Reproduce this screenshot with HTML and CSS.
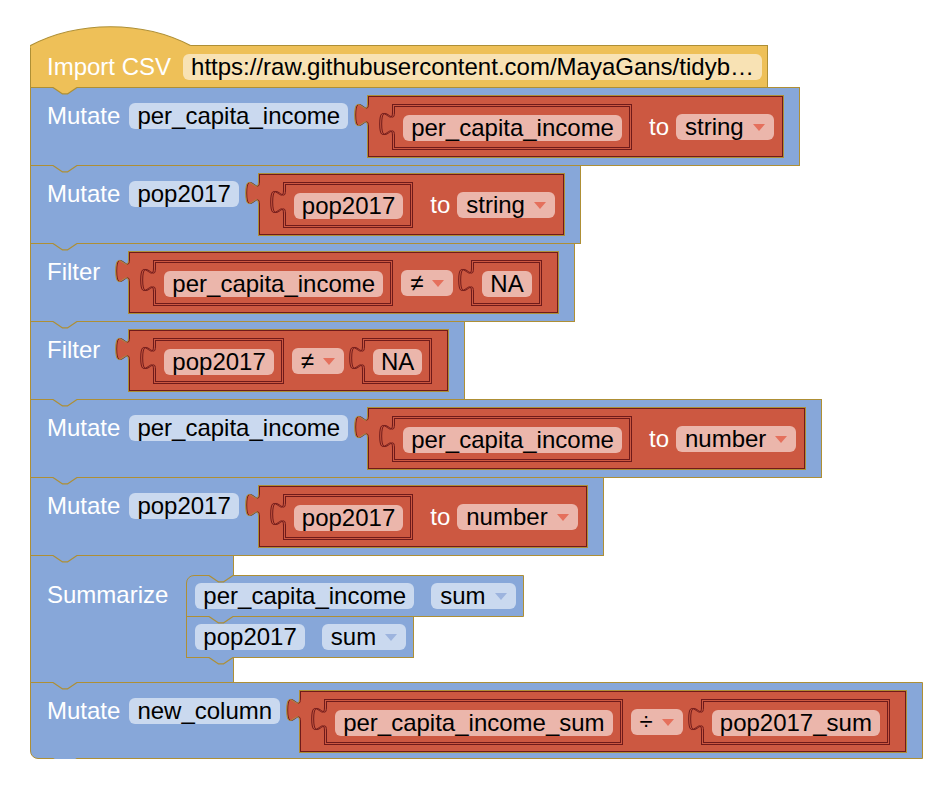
FILE: index.html
```html
<!doctype html>
<html lang="en">
  <head>
    <meta charset="utf-8" />
    <meta name="viewport" content="width=device-width, initial-scale=1" />
    <title>Blocks workspace</title>
    <link rel="stylesheet" href="styles.css">
  </head>
  <body>
    <div class="workspace">
      <div class="stack">

        <!-- Import -->
        <div class="block import">
          <svg class="hat" width="162" height="26" viewBox="0 0 162 26"><path class="hf" d="M0.5,26V23.5c48,-25 112,-25 160,0V26Z"/><path class="hs" d="M0.5,23.5c48,-25 112,-25 160,0"/></svg>
          <span class="lbl">Import CSV</span>
          <span class="field">https://raw.githubusercontent.com/MayaGans/tidyb…</span>
        </div>

        <!-- Mutate per_capita_income -> string -->
        <div class="block stmt">
          <svg class="notch from-yellow" width="26" height="9" viewBox="0 -1 26 9"><path class="nf" d="M0,-1V0.5L9.6,6.9H14.4L24,0.5V-1Z"/><path class="ns" d="M0,0.5L9.6,6.9H14.4L24,0.5"/></svg>
          <span class="lbl">Mutate</span>
          <span class="field">per_capita_income</span>
          <div class="val">
            <svg class="tab" width="18" height="34" viewBox="0 0 18 34"><path class="tf" d="M13.5,8c0,16 -12.8,-12.8 -12.8,12s12.8,-4 12.8,12H17V8Z"/><path class="t2" d="M14.5,8c0,16 -12.8,-12.8 -12.8,12s12.8,-4 12.8,12"/><path class="t1" d="M13.5,8c0,16 -12.8,-12.8 -12.8,12s12.8,-4 12.8,12"/></svg>
            <div class="frame">
              <svg class="tab" width="18" height="34" viewBox="0 0 18 34"><path class="tf" d="M13.5,8c0,16 -12.8,-12.8 -12.8,12s12.8,-4 12.8,12H17V8Z"/><path class="t2" d="M15.5,8c0,16 -12.8,-12.8 -12.8,12s12.8,-4 12.8,12"/><path class="t1" d="M13.5,8c0,16 -12.8,-12.8 -12.8,12s12.8,-4 12.8,12"/></svg>
              <span class="field">per_capita_income</span>
            </div>
            <span class="rtxt">to</span>
            <span class="dd">string<i class="arrow"></i></span>
          </div>
        </div>

        <!-- Mutate pop2017 -> string -->
        <div class="block stmt">
          <svg class="notch" width="26" height="9" viewBox="0 -1 26 9"><path class="nf" d="M0,-1V0.5L9.6,6.9H14.4L24,0.5V-1Z"/><path class="ns" d="M0,0.5L9.6,6.9H14.4L24,0.5"/></svg>
          <span class="lbl">Mutate</span>
          <span class="field">pop2017</span>
          <div class="val">
            <svg class="tab" width="18" height="34" viewBox="0 0 18 34"><path class="tf" d="M13.5,8c0,16 -12.8,-12.8 -12.8,12s12.8,-4 12.8,12H17V8Z"/><path class="t2" d="M14.5,8c0,16 -12.8,-12.8 -12.8,12s12.8,-4 12.8,12"/><path class="t1" d="M13.5,8c0,16 -12.8,-12.8 -12.8,12s12.8,-4 12.8,12"/></svg>
            <div class="frame">
              <svg class="tab" width="18" height="34" viewBox="0 0 18 34"><path class="tf" d="M13.5,8c0,16 -12.8,-12.8 -12.8,12s12.8,-4 12.8,12H17V8Z"/><path class="t2" d="M15.5,8c0,16 -12.8,-12.8 -12.8,12s12.8,-4 12.8,12"/><path class="t1" d="M13.5,8c0,16 -12.8,-12.8 -12.8,12s12.8,-4 12.8,12"/></svg>
              <span class="field">pop2017</span>
            </div>
            <span class="rtxt">to</span>
            <span class="dd">string<i class="arrow"></i></span>
          </div>
        </div>

        <!-- Filter per_capita_income != NA -->
        <div class="block stmt">
          <svg class="notch" width="26" height="9" viewBox="0 -1 26 9"><path class="nf" d="M0,-1V0.5L9.6,6.9H14.4L24,0.5V-1Z"/><path class="ns" d="M0,0.5L9.6,6.9H14.4L24,0.5"/></svg>
          <span class="lbl">Filter</span>
          <div class="val">
            <svg class="tab" width="18" height="34" viewBox="0 0 18 34"><path class="tf" d="M13.5,8c0,16 -12.8,-12.8 -12.8,12s12.8,-4 12.8,12H17V8Z"/><path class="t2" d="M14.5,8c0,16 -12.8,-12.8 -12.8,12s12.8,-4 12.8,12"/><path class="t1" d="M13.5,8c0,16 -12.8,-12.8 -12.8,12s12.8,-4 12.8,12"/></svg>
            <div class="frame">
              <svg class="tab" width="18" height="34" viewBox="0 0 18 34"><path class="tf" d="M13.5,8c0,16 -12.8,-12.8 -12.8,12s12.8,-4 12.8,12H17V8Z"/><path class="t2" d="M15.5,8c0,16 -12.8,-12.8 -12.8,12s12.8,-4 12.8,12"/><path class="t1" d="M13.5,8c0,16 -12.8,-12.8 -12.8,12s12.8,-4 12.8,12"/></svg>
              <span class="field">per_capita_income</span>
            </div>
            <span class="dd">≠<i class="arrow"></i></span>
            <div class="frame">
              <svg class="tab" width="18" height="34" viewBox="0 0 18 34"><path class="tf" d="M13.5,8c0,16 -12.8,-12.8 -12.8,12s12.8,-4 12.8,12H17V8Z"/><path class="t2" d="M15.5,8c0,16 -12.8,-12.8 -12.8,12s12.8,-4 12.8,12"/><path class="t1" d="M13.5,8c0,16 -12.8,-12.8 -12.8,12s12.8,-4 12.8,12"/></svg>
              <span class="field">NA</span>
            </div>
          </div>
        </div>

        <!-- Filter pop2017 != NA -->
        <div class="block stmt">
          <svg class="notch" width="26" height="9" viewBox="0 -1 26 9"><path class="nf" d="M0,-1V0.5L9.6,6.9H14.4L24,0.5V-1Z"/><path class="ns" d="M0,0.5L9.6,6.9H14.4L24,0.5"/></svg>
          <span class="lbl">Filter</span>
          <div class="val">
            <svg class="tab" width="18" height="34" viewBox="0 0 18 34"><path class="tf" d="M13.5,8c0,16 -12.8,-12.8 -12.8,12s12.8,-4 12.8,12H17V8Z"/><path class="t2" d="M14.5,8c0,16 -12.8,-12.8 -12.8,12s12.8,-4 12.8,12"/><path class="t1" d="M13.5,8c0,16 -12.8,-12.8 -12.8,12s12.8,-4 12.8,12"/></svg>
            <div class="frame">
              <svg class="tab" width="18" height="34" viewBox="0 0 18 34"><path class="tf" d="M13.5,8c0,16 -12.8,-12.8 -12.8,12s12.8,-4 12.8,12H17V8Z"/><path class="t2" d="M15.5,8c0,16 -12.8,-12.8 -12.8,12s12.8,-4 12.8,12"/><path class="t1" d="M13.5,8c0,16 -12.8,-12.8 -12.8,12s12.8,-4 12.8,12"/></svg>
              <span class="field">pop2017</span>
            </div>
            <span class="dd">≠<i class="arrow"></i></span>
            <div class="frame">
              <svg class="tab" width="18" height="34" viewBox="0 0 18 34"><path class="tf" d="M13.5,8c0,16 -12.8,-12.8 -12.8,12s12.8,-4 12.8,12H17V8Z"/><path class="t2" d="M15.5,8c0,16 -12.8,-12.8 -12.8,12s12.8,-4 12.8,12"/><path class="t1" d="M13.5,8c0,16 -12.8,-12.8 -12.8,12s12.8,-4 12.8,12"/></svg>
              <span class="field">NA</span>
            </div>
          </div>
        </div>

        <!-- Mutate per_capita_income -> number -->
        <div class="block stmt">
          <svg class="notch" width="26" height="9" viewBox="0 -1 26 9"><path class="nf" d="M0,-1V0.5L9.6,6.9H14.4L24,0.5V-1Z"/><path class="ns" d="M0,0.5L9.6,6.9H14.4L24,0.5"/></svg>
          <span class="lbl">Mutate</span>
          <span class="field">per_capita_income</span>
          <div class="val">
            <svg class="tab" width="18" height="34" viewBox="0 0 18 34"><path class="tf" d="M13.5,8c0,16 -12.8,-12.8 -12.8,12s12.8,-4 12.8,12H17V8Z"/><path class="t2" d="M14.5,8c0,16 -12.8,-12.8 -12.8,12s12.8,-4 12.8,12"/><path class="t1" d="M13.5,8c0,16 -12.8,-12.8 -12.8,12s12.8,-4 12.8,12"/></svg>
            <div class="frame">
              <svg class="tab" width="18" height="34" viewBox="0 0 18 34"><path class="tf" d="M13.5,8c0,16 -12.8,-12.8 -12.8,12s12.8,-4 12.8,12H17V8Z"/><path class="t2" d="M15.5,8c0,16 -12.8,-12.8 -12.8,12s12.8,-4 12.8,12"/><path class="t1" d="M13.5,8c0,16 -12.8,-12.8 -12.8,12s12.8,-4 12.8,12"/></svg>
              <span class="field">per_capita_income</span>
            </div>
            <span class="rtxt">to</span>
            <span class="dd">number<i class="arrow"></i></span>
          </div>
        </div>

        <!-- Mutate pop2017 -> number -->
        <div class="block stmt">
          <svg class="notch" width="26" height="9" viewBox="0 -1 26 9"><path class="nf" d="M0,-1V0.5L9.6,6.9H14.4L24,0.5V-1Z"/><path class="ns" d="M0,0.5L9.6,6.9H14.4L24,0.5"/></svg>
          <span class="lbl">Mutate</span>
          <span class="field">pop2017</span>
          <div class="val">
            <svg class="tab" width="18" height="34" viewBox="0 0 18 34"><path class="tf" d="M13.5,8c0,16 -12.8,-12.8 -12.8,12s12.8,-4 12.8,12H17V8Z"/><path class="t2" d="M14.5,8c0,16 -12.8,-12.8 -12.8,12s12.8,-4 12.8,12"/><path class="t1" d="M13.5,8c0,16 -12.8,-12.8 -12.8,12s12.8,-4 12.8,12"/></svg>
            <div class="frame">
              <svg class="tab" width="18" height="34" viewBox="0 0 18 34"><path class="tf" d="M13.5,8c0,16 -12.8,-12.8 -12.8,12s12.8,-4 12.8,12H17V8Z"/><path class="t2" d="M15.5,8c0,16 -12.8,-12.8 -12.8,12s12.8,-4 12.8,12"/><path class="t1" d="M13.5,8c0,16 -12.8,-12.8 -12.8,12s12.8,-4 12.8,12"/></svg>
              <span class="field">pop2017</span>
            </div>
            <span class="rtxt">to</span>
            <span class="dd">number<i class="arrow"></i></span>
          </div>
        </div>

        <!-- Summarize -->
        <div class="block summ">
          <svg class="notch" width="26" height="9" viewBox="0 -1 26 9"><path class="nf" d="M0,-1V0.5L9.6,6.9H14.4L24,0.5V-1Z"/><path class="ns" d="M0,0.5L9.6,6.9H14.4L24,0.5"/></svg>
          <span class="lbl">Summarize</span>
          <div class="inner">
            <div class="nested first">
              <svg class="notch" width="26" height="9" viewBox="0 -1 26 9"><path class="nf" d="M0,-1V0.5L9.6,6.9H14.4L24,0.5V-1Z"/><path class="ns" d="M0,0.5L9.6,6.9H14.4L24,0.5"/></svg>
              <span class="field">per_capita_income</span>
              <span class="dd">sum<i class="arrow"></i></span>
            </div>
            <div class="nested">
              <svg class="notch" width="26" height="9" viewBox="0 -1 26 9"><path class="nf" d="M0,-1V0.5L9.6,6.9H14.4L24,0.5V-1Z"/><path class="ns" d="M0,0.5L9.6,6.9H14.4L24,0.5"/></svg>
              <span class="field">pop2017</span>
              <span class="dd">sum<i class="arrow"></i></span>
              <svg class="next" width="26" height="9" viewBox="0 -1 26 9"><path class="nf" d="M0,-1V0.5L9.6,6.9H14.4L24,0.5V-1Z"/><path class="ns" d="M0,0.5L9.6,6.9H14.4L24,0.5"/></svg>
            </div>
          </div>
        </div>

        <!-- Mutate new_column = a / b -->
        <div class="block stmt last">
          <svg class="notch" width="26" height="9" viewBox="0 -1 26 9"><path class="nf" d="M0,-1V0.5L9.6,6.9H14.4L24,0.5V-1Z"/><path class="ns" d="M0,0.5L9.6,6.9H14.4L24,0.5"/></svg>
          <span class="lbl">Mutate</span>
          <span class="field">new_column</span>
          <div class="val">
            <svg class="tab" width="18" height="34" viewBox="0 0 18 34"><path class="tf" d="M13.5,8c0,16 -12.8,-12.8 -12.8,12s12.8,-4 12.8,12H17V8Z"/><path class="t2" d="M14.5,8c0,16 -12.8,-12.8 -12.8,12s12.8,-4 12.8,12"/><path class="t1" d="M13.5,8c0,16 -12.8,-12.8 -12.8,12s12.8,-4 12.8,12"/></svg>
            <div class="frame">
              <svg class="tab" width="18" height="34" viewBox="0 0 18 34"><path class="tf" d="M13.5,8c0,16 -12.8,-12.8 -12.8,12s12.8,-4 12.8,12H17V8Z"/><path class="t2" d="M15.5,8c0,16 -12.8,-12.8 -12.8,12s12.8,-4 12.8,12"/><path class="t1" d="M13.5,8c0,16 -12.8,-12.8 -12.8,12s12.8,-4 12.8,12"/></svg>
              <span class="field">per_capita_income_sum</span>
            </div>
            <span class="dd">÷<i class="arrow"></i></span>
            <div class="frame">
              <svg class="tab" width="18" height="34" viewBox="0 0 18 34"><path class="tf" d="M13.5,8c0,16 -12.8,-12.8 -12.8,12s12.8,-4 12.8,12H17V8Z"/><path class="t2" d="M15.5,8c0,16 -12.8,-12.8 -12.8,12s12.8,-4 12.8,12"/><path class="t1" d="M13.5,8c0,16 -12.8,-12.8 -12.8,12s12.8,-4 12.8,12"/></svg>
              <span class="field">pop2017_sum</span>
            </div>
          </div>
          <svg class="next" width="26" height="9" viewBox="0 -1 26 9"><path class="nf" d="M0,-1V0.5L9.6,6.9H14.4L24,0.5V-1Z"/><path class="ns" d="M0,0.5L9.6,6.9H14.4L24,0.5"/></svg>
        </div>

      </div>
    </div>
  </body>
</html>
```

FILE: styles.css
```css
* {
  box-sizing: border-box;
}

body {
  margin: 0;
  background: #fff;
  font-family: "Liberation Sans", Arial, sans-serif;
  font-size: 24px;
}

.workspace {
  padding: 45px 0 0 30px;
}

.stack {
  display: flex;
  flex-direction: column;
  align-items: flex-start;
}

/* blocks */
.block {
  position: relative;
  border: 1px solid #ae8f35;
  flex-shrink: 0;
}

.block + .block {
  margin-top: -1px;
}

.import {
  display: flex;
  align-items: center;
  background: #eec058;
  padding: 8px 5px 7px 16px;
}

.import .lbl {
  margin-right: 12px;
}

.import .field {
  background: #f8e2b4;
}

.stmt {
  display: flex;
  align-items: flex-start;
  background: #87a7d9;
  padding: 7px 15px 7px 16px;
}

.stmt.last {
  padding-bottom: 5px;
  border-bottom-left-radius: 8px;
}

.stmt > .lbl,
.stmt > .field {
  margin-top: 8px;
}

.lbl {
  color: #fff;
  line-height: 26px;
  white-space: nowrap;
  margin-right: 9px;
  flex-shrink: 0;
}

.field {
  display: inline-block;
  flex-shrink: 0;
  height: 26px;
  line-height: 26px;
  padding: 0 8px;
  border-radius: 6px;
  background: #cad9ef;
  color: #000;
  white-space: nowrap;
}

/* red value blocks */
.val {
  position: relative;
  display: flex;
  align-items: center;
  flex-shrink: 0;
  margin-left: 19px;
  padding: 8px 9px 7px 24px;
  background: #cc5841;
  border: 1px solid #ae8f35;
  box-shadow: inset 0 0 0 1px #6f1a1a;
}

.frame {
  position: relative;
  display: flex;
  flex-shrink: 0;
  padding: 10px 9px 8px 10px;
  background: #cc5841;
  border: 1px solid #6f1a1a;
  box-shadow: inset 0 0 0 1px #cc5841, inset 0 0 0 2px #6f1a1a;
}

.val .field {
  background: #ebb6ab;
}

.rtxt {
  color: #fff;
  line-height: 26px;
  white-space: nowrap;
}

.frame + .rtxt {
  margin-left: 17px;
}

.rtxt + .dd {
  margin-left: 7px;
}

.frame + .dd {
  margin-left: 8px;
}

.dd + .frame {
  margin-left: 18px;
}

.val > .frame:last-child {
  margin-right: 7px;
}

/* dropdowns */
.dd {
  display: inline-flex;
  align-items: center;
  flex-shrink: 0;
  height: 26px;
  line-height: 26px;
  padding: 0 9px;
  border-radius: 6px;
  background: #cad9ef;
  color: #000;
  white-space: nowrap;
}

.val .dd {
  background: #ebb6ab;
}

.arrow {
  display: inline-block;
  width: 0;
  height: 0;
  margin-left: 9px;
  border-left: 6.5px solid transparent;
  border-right: 6.5px solid transparent;
  border-top: 7px solid #9db4de;
}

.val .arrow {
  border-top-color: #e5705c;
}

/* puzzle tabs */
.tab {
  position: absolute;
  left: -14px;
  top: -1px;
  overflow: visible;
}

.tab .tf {
  fill: #cc5841;
}

.tab .t1,
.tab .t2 {
  fill: none;
  stroke-width: 1;
}

.val > .tab .t1 {
  stroke: #ae8f35;
}

.val > .tab .t2,
.frame > .tab .t1,
.frame > .tab .t2 {
  stroke: #6f1a1a;
}

/* notches between statements */
.notch,
.next {
  position: absolute;
  left: 22px;
  overflow: visible;
}

.notch {
  top: -2px;
}

.next {
  top: calc(100% - 1px);
}

.nf {
  fill: #87a7d9;
}

.from-yellow .nf {
  fill: #eec058;
}

.ns {
  fill: none;
  stroke: #ae8f35;
  stroke-width: 1.2;
  stroke-linejoin: round;
}

.hat {
  position: absolute;
  left: -1px;
  top: -24px;
  overflow: visible;
}

.hf {
  fill: #eec058;
}

.hs {
  fill: none;
  stroke: #ae8f35;
  stroke-width: 1.2;
}

/* summarize with statement input */
.summ {
  display: flex;
  align-items: flex-start;
  width: 204px;
  background: #87a7d9;
  padding: 19px 0 24px 16px;
}

.summ > .lbl {
  margin-top: 7px;
  margin-right: 18px;
}

.inner {
  display: flex;
  flex-direction: column;
  align-items: flex-start;
  flex-shrink: 0;
}

.nested {
  position: relative;
  display: flex;
  align-items: center;
  background: #87a7d9;
  border: 1px solid #ae8f35;
  padding: 7px 7px 7px 8px;
}

.nested + .nested {
  margin-top: -1px;
}

.nested.first {
  border-top-left-radius: 8px;
}

.nested .dd {
  margin-left: 17px;
}
```
